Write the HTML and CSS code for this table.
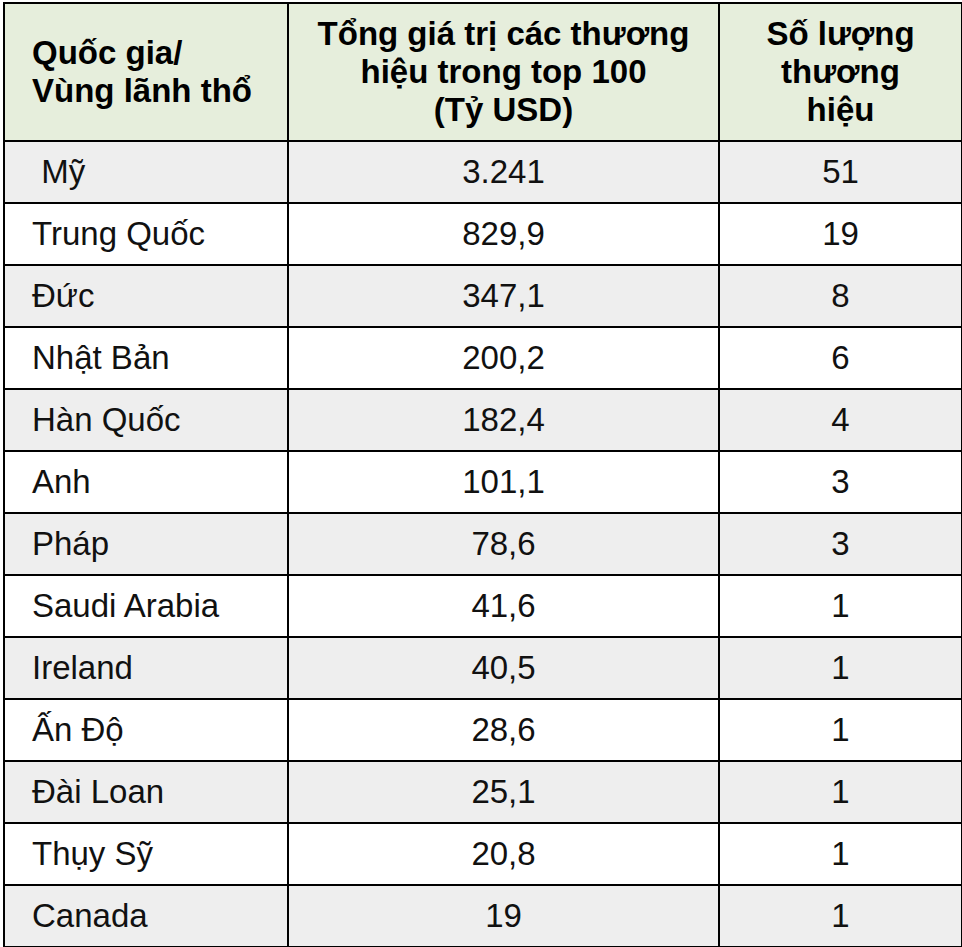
FILE: index.html
```html
<!DOCTYPE html>
<html lang="vi">
<head>
<meta charset="utf-8">
<title>Top 100 thương hiệu</title>
<link rel="stylesheet" href="styles.css">
</head>
<body>
<table class="brand-table">
  <colgroup>
    <col class="c-country">
    <col class="c-value">
    <col class="c-count">
  </colgroup>
  <thead>
    <tr class="head-row">
      <th class="left">Quốc gia/<br>Vùng lãnh thổ</th>
      <th>Tổng giá trị các thương<br>hiệu trong top 100<br>(Tỷ USD)</th>
      <th>Số lượng<br>thương<br>hiệu</th>
    </tr>
  </thead>
  <tbody>
    <tr class="shade"><td class="left">&nbsp;Mỹ</td><td>3.241</td><td>51</td></tr>
    <tr><td class="left">Trung Quốc</td><td>829,9</td><td>19</td></tr>
    <tr class="shade"><td class="left">Đức</td><td>347,1</td><td>8</td></tr>
    <tr><td class="left">Nhật Bản</td><td>200,2</td><td>6</td></tr>
    <tr class="shade"><td class="left">Hàn Quốc</td><td>182,4</td><td>4</td></tr>
    <tr><td class="left">Anh</td><td>101,1</td><td>3</td></tr>
    <tr class="shade"><td class="left">Pháp</td><td>78,6</td><td>3</td></tr>
    <tr><td class="left">Saudi Arabia</td><td>41,6</td><td>1</td></tr>
    <tr class="shade"><td class="left">Ireland</td><td>40,5</td><td>1</td></tr>
    <tr><td class="left">Ấn Độ</td><td>28,6</td><td>1</td></tr>
    <tr class="shade"><td class="left">Đài Loan</td><td>25,1</td><td>1</td></tr>
    <tr><td class="left">Thụy Sỹ</td><td>20,8</td><td>1</td></tr>
    <tr class="shade"><td class="left">Canada</td><td>19</td><td>1</td></tr>
  </tbody>
</table>
</body>
</html>
```
FILE: styles.css
```css
html, body {
  margin: 0;
  padding: 0;
  background: #ffffff;
}
body {
  padding: 2px 0 0 3px;
  font-family: "Liberation Sans", Arial, sans-serif;
  color: #000;
}
.brand-table {
  border-collapse: collapse;
  table-layout: fixed;
  width: 958px;
  font-size: 33px;
}
.c-country { width: 284px; }
.c-value { width: 431px; }
.c-count { width: 243px; }
.brand-table th,
.brand-table td {
  border: 2px solid #000;
  padding: 0 6px;
  text-align: center;
  vertical-align: middle;
}
.brand-table th {
  font-weight: bold;
  line-height: 38px;
  background: #e6eedc;
}
.head-row { height: 138px; }
.brand-table tbody tr { height: 62px; }
.brand-table td { line-height: 36px; color: #111; }
.brand-table .left {
  text-align: left;
  padding-left: 27px;
}
.shade td { background: #eeeeee; }
```
